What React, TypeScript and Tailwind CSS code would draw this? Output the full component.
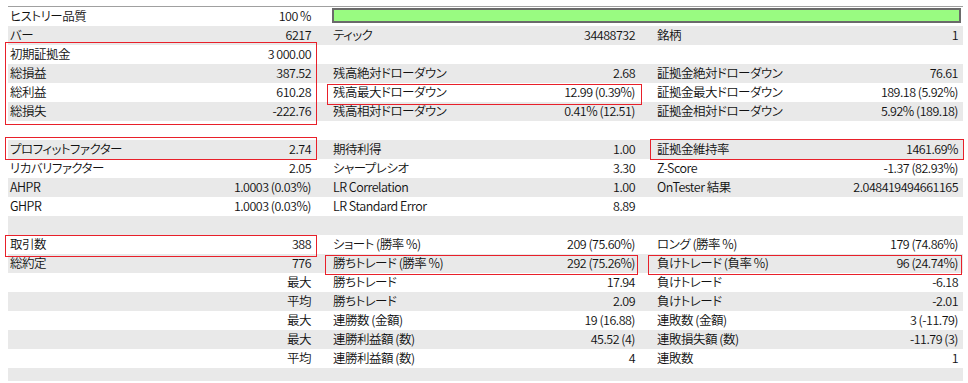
import React from "react";

type Cell = { label?: string; value?: string };
type Row = [Cell, Cell, Cell];

const rows: Row[] = [
  [{ label: "バー", value: "6217" }, { label: "ティック", value: "34488732" }, { label: "銘柄", value: "1" }],
  [{ label: "初期証拠金", value: "3 000.00" }, {}, {}],
  [
    { label: "総損益", value: "387.52" },
    { label: "残高絶対ドローダウン", value: "2.68" },
    { label: "証拠金絶対ドローダウン", value: "76.61" },
  ],
  [
    { label: "総利益", value: "610.28" },
    { label: "残高最大ドローダウン", value: "12.99 (0.39%)" },
    { label: "証拠金最大ドローダウン", value: "189.18 (5.92%)" },
  ],
  [
    { label: "総損失", value: "-222.76" },
    { label: "残高相対ドローダウン", value: "0.41% (12.51)" },
    { label: "証拠金相対ドローダウン", value: "5.92% (189.18)" },
  ],
  [{}, {}, {}],
  [
    { label: "プロフィットファクター", value: "2.74" },
    { label: "期待利得", value: "1.00" },
    { label: "証拠金維持率", value: "1461.69%" },
  ],
  [
    { label: "リカバリファクター", value: "2.05" },
    { label: "シャープレシオ", value: "3.30" },
    { label: "Z-Score", value: "-1.37 (82.93%)" },
  ],
  [
    { label: "AHPR", value: "1.0003 (0.03%)" },
    { label: "LR Correlation", value: "1.00" },
    { label: "OnTester 結果", value: "2.048419494661165" },
  ],
  [{ label: "GHPR", value: "1.0003 (0.03%)" }, { label: "LR Standard Error", value: "8.89" }, {}],
  [{}, {}, {}],
  [
    { label: "取引数", value: "388" },
    { label: "ショート (勝率 %)", value: "209 (75.60%)" },
    { label: "ロング (勝率 %)", value: "179 (74.86%)" },
  ],
  [
    { label: "総約定", value: "776" },
    { label: "勝ちトレード (勝率 %)", value: "292 (75.26%)" },
    { label: "負けトレード (負率 %)", value: "96 (24.74%)" },
  ],
  [{ value: "最大" }, { label: "勝ちトレード", value: "17.94" }, { label: "負けトレード", value: "-6.18" }],
  [{ value: "平均" }, { label: "勝ちトレード", value: "2.09" }, { label: "負けトレード", value: "-2.01" }],
  [
    { value: "最大" },
    { label: "連勝数 (金額)", value: "19 (16.88)" },
    { label: "連敗数 (金額)", value: "3 (-11.79)" },
  ],
  [
    { value: "最大" },
    { label: "連勝利益額 (数)", value: "45.52 (4)" },
    { label: "連敗損失額 (数)", value: "-11.79 (3)" },
  ],
  [{ value: "平均" }, { label: "連勝利益額 (数)", value: "4" }, { label: "連敗数", value: "1" }],
];

const highlights = [
  "left-[5px] top-[42px] w-[312px] h-[83px]",
  "left-[327px] top-[84px] w-[315px] h-[21px]",
  "left-[5px] top-[137px] w-[312px] h-[23px]",
  "left-[650px] top-[139px] w-[314px] h-[21px]",
  "left-[5px] top-[235px] w-[312px] h-[22px]",
  "left-[325px] top-[255px] w-[313px] h-[20px]",
  "left-[648px] top-[255px] w-[314px] h-[20px]",
];

function StatCell({ cell, last }: { cell: Cell; last?: boolean }) {
  return (
    <div className={`flex items-center justify-between pl-[2px] ${last ? "pr-[5px]" : "pr-[20px]"}`}>
      <span>{cell.label}</span>
      <span className="whitespace-pre">{cell.value}</span>
    </div>
  );
}

export default function App() {
  return (
    <div className="relative h-[383px] w-[968px] overflow-hidden bg-white text-[12.5px] font-[350] leading-none tracking-[-0.5px] text-[#111] [font-family:'Noto_Sans_CJK_JP',sans-serif] [font-feature-settings:'palt']">
      <div className="ml-2 w-[955px] pt-[6px]">
        <div className="h-px bg-[#a0a0a0]" />

        <div className="grid h-[19px] grid-cols-[323px_632px]">
          <StatCell cell={{ label: "ヒストリー品質", value: "100 %" }} />
          <div className="ml-px mr-[2px] mt-px h-[15px] border-2 border-[#6a6a6a] bg-[#99fb81]" />
        </div>

        {rows.map((row, i) => (
          <div
            key={i}
            className={`grid h-[19px] grid-cols-[323px_324px_308px] ${i % 2 === 0 ? "bg-[#e9e9e9]" : "bg-white"}`}
          >
            <StatCell cell={row[0]} />
            <StatCell cell={row[1]} />
            <StatCell cell={row[2]} last />
          </div>
        ))}

        <div className="h-[13px] bg-[#e9e9e9]" />
      </div>

      {highlights.map((pos) => (
        <div key={pos} className={`pointer-events-none absolute border border-[#e8202a] ${pos}`} />
      ))}
    </div>
  );
}
